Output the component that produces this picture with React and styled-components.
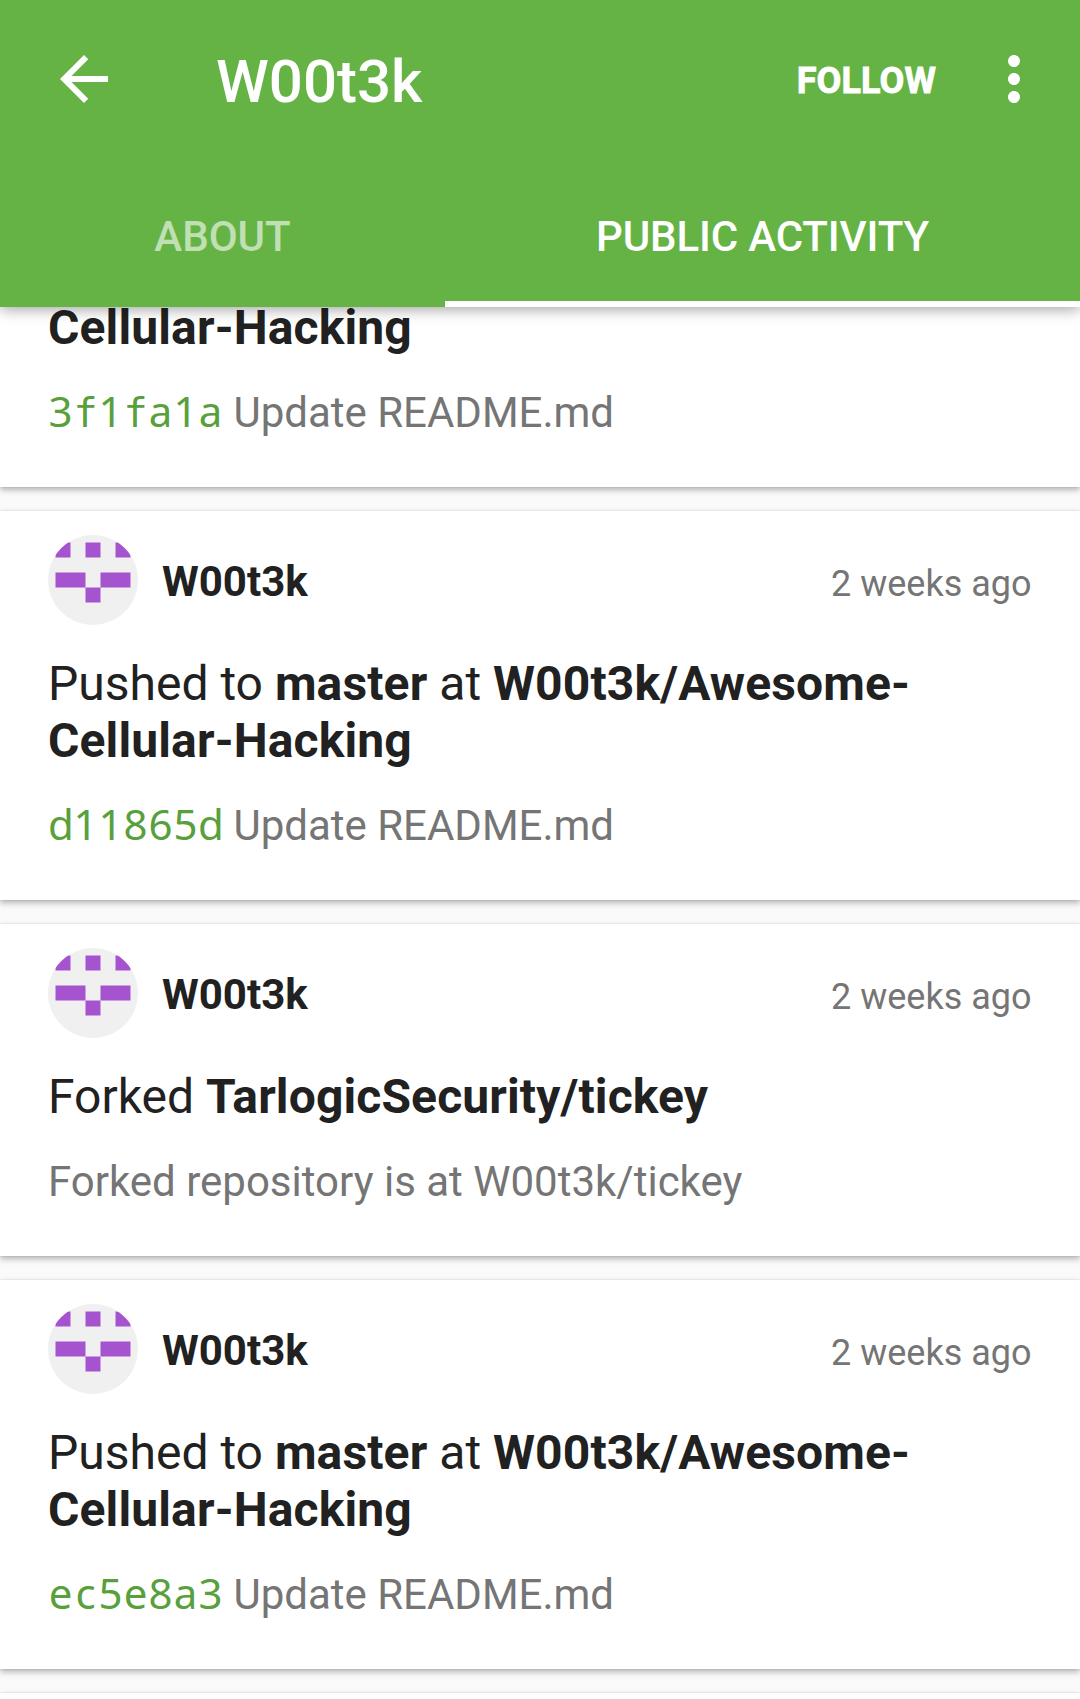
import React from "react";
import styled, { createGlobalStyle } from "styled-components";

const GlobalStyle = createGlobalStyle`
  * { box-sizing: border-box; }
  body {
    margin: 0;
    background: #fafafa;
    font-family: Roboto, "Noto Sans", sans-serif;
    color: #212121;
  }
`;

const Screen = styled.div`
  width: 1080px;
  height: 1699px;
  overflow: hidden;
  display: flex;
  flex-direction: column;
`;

const AppBar = styled.header`
  position: relative;
  z-index: 1;
  flex: none;
  height: 307px;
  background: #66b345;
  color: #fff;
  display: flex;
  flex-direction: column;
  box-shadow: 0 3px 13px rgba(0, 0, 0, 0.34);
`;

const Toolbar = styled.div`
  height: 163px;
  padding: 0 30px 5px 48px;
  display: flex;
  align-items: center;
`;

const IconButton = styled.button`
  border: 0;
  padding: 0;
  background: none;
  color: inherit;
  display: flex;
  svg {
    width: 72px;
    height: 72px;
    fill: currentColor;
  }
`;

const Title = styled.h1`
  flex: 1;
  margin: 6px 0 0 96px;
  font-size: 60px;
  line-height: 70px;
  font-weight: 500;
`;

const FollowButton = styled.button`
  border: 0;
  padding: 0;
  margin: 4px 42px 0 0;
  background: none;
  color: inherit;
  font: 700 36px/42px Roboto, sans-serif;
  letter-spacing: 0.1px;
  -webkit-text-stroke: 0.8px currentColor;
`;

const Tabs = styled.nav`
  flex: 1;
  display: flex;
`;

const Tab = styled.div`
  width: ${(p) => p.$width}px;
  display: flex;
  align-items: center;
  justify-content: center;
  padding-top: ${(p) => (p.$active ? 8 : 2)}px;
  border-bottom: ${(p) => (p.$active ? "6px solid #fff" : "0")};
  color: ${(p) => (p.$active ? "#fff" : "rgba(255, 255, 255, 0.6)")};
  font-size: 42px;
  line-height: 49px;
  font-weight: 500;
  letter-spacing: ${(p) => (p.$active ? "-0.15px" : "0")};
`;

const Feed = styled.main`
  display: flex;
  flex-direction: column;
  gap: 24px;
  margin-top: -8px;
`;

const Card = styled.article`
  flex: none;
  height: ${(p) => p.$height}px;
  padding: ${(p) => (p.$continued ? 0 : 24)}px 48px 0;
  background: #fff;
  box-shadow: 0 3px 6px rgba(0, 0, 0, 0.28), 0 0 2px rgba(0, 0, 0, 0.12);
`;

const CardHeader = styled.div`
  height: 90px;
  display: flex;
  align-items: center;
  margin-bottom: 30px;
`;

const Avatar = styled.svg`
  width: 90px;
  height: 90px;
  border-radius: 50%;
  background: #f0f0f0;
  fill: #a653cf;
`;

const Author = styled.span`
  flex: 1;
  margin: 2px 0 0 24px;
  font-size: 42px;
  line-height: 49px;
  font-weight: 700;
`;

const Time = styled.time`
  margin: 8px 0.5px 0 0;
  font-size: 36px;
  line-height: 42px;
  color: #757575;
`;

const Event = styled.p`
  margin: 0;
  font-size: 48px;
  line-height: 57px;
  b {
    font-weight: 700;
    letter-spacing: 0.13px;
  }
`;

const Detail = styled.p`
  margin: 32px 0 0;
  height: 49px;
  font-size: 42px;
  line-height: 49px;
  color: #757575;
  white-space: nowrap;
`;

const Hash = styled.span`
  color: #58a03c;
`;

const HashChar = styled.span`
  display: inline-block;
  width: 25px;
  line-height: 40px;
  text-align: center;
  font-family: ${(p) => (p.$wide ? '"DejaVu Sans Mono", monospace' : '"Noto Sans", sans-serif')};
  font-size: ${(p) => (p.$wide ? 40 : 42)}px;
`;

const Identicon = () => (
  <Avatar viewBox="0 0 90 90">
    <path d="M7.5 7.5h15v15h-15zM37.5 7.5h15v15h-15zM67.5 7.5h15v15h-15zM7.5 37.5h30v15h-30zM52.5 37.5h30v15h-30zM37.5 52.5h15v15h-15z" />
  </Avatar>
);

const Commit = ({ hash, message }) => (
  <Detail>
    <Hash>
      {hash.split("").map((c, i) => (
        <HashChar key={i} $wide={c === "f"}>{c}</HashChar>
      ))}
    </Hash>{" "}
    {message}
  </Detail>
);

const ActivityCard = ({ height, children }) => (
  <Card $height={height}>
    <CardHeader>
      <Identicon />
      <Author>W00t3k</Author>
      <Time>2 weeks ago</Time>
    </CardHeader>
    {children}
  </Card>
);

const PushEvent = () => (
  <Event>
    Pushed to <b>master</b> at <b>W00t3k/Awesome-<br />Cellular-Hacking</b>
  </Event>
);

export default function App() {
  return (
    <Screen>
      <GlobalStyle />
      <AppBar>
        <Toolbar>
          <IconButton aria-label="Back">
            <svg viewBox="0 0 24 24">
              <path d="M20 11H7.83l5.59-5.59L12 4l-8 8 8 8 1.41-1.41L7.83 13H20v-2z" />
            </svg>
          </IconButton>
          <Title>W00t3k</Title>
          <FollowButton>FOLLOW</FollowButton>
          <IconButton aria-label="More options">
            <svg viewBox="0 0 24 24">
              <path d="M12 8c1.1 0 2-.9 2-2s-.9-2-2-2-2 .9-2 2 .9 2 2 2zm0 2c-1.1 0-2 .9-2 2s.9 2 2 2 2-.9 2-2-.9-2-2-2zm0 6c-1.1 0-2 .9-2 2s.9 2 2 2 2-.9 2-2-.9-2-2-2z" />
            </svg>
          </IconButton>
        </Toolbar>
        <Tabs>
          <Tab $width={445}>ABOUT</Tab>
          <Tab $width={635} $active>PUBLIC ACTIVITY</Tab>
        </Tabs>
      </AppBar>
      <Feed>
        <Card $height={188} $continued>
          <Event><b>Cellular-Hacking</b></Event>
          <Commit hash="3f1fa1a" message="Update README.md" />
        </Card>
        <ActivityCard height={389}>
          <PushEvent />
          <Commit hash="d11865d" message="Update README.md" />
        </ActivityCard>
        <ActivityCard height={332}>
          <Event>Forked <b>TarlogicSecurity/tickey</b></Event>
          <Detail>Forked repository is at W00t3k/tickey</Detail>
        </ActivityCard>
        <ActivityCard height={389}>
          <PushEvent />
          <Commit hash="ec5e8a3" message="Update README.md" />
        </ActivityCard>
        <Card $height={40} $continued />
      </Feed>
    </Screen>
  );
}
